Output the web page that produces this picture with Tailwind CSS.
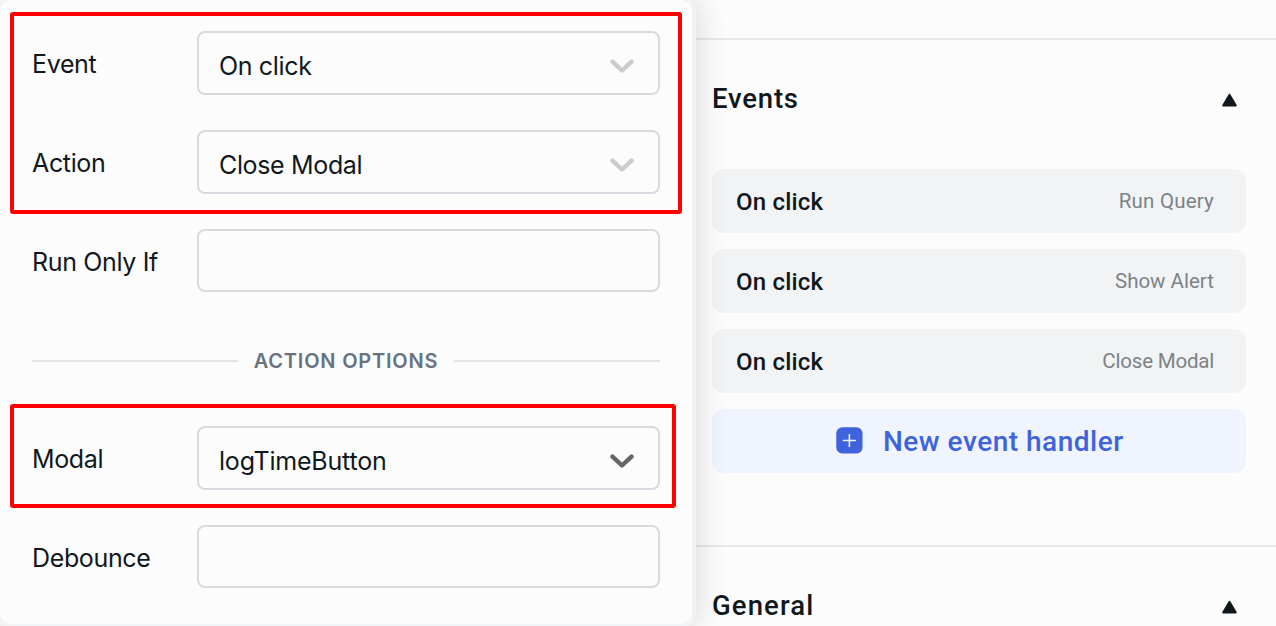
<!DOCTYPE html>
<html lang="en">
<head>
<meta charset="utf-8">
<title>Event handlers</title>
<script src="https://cdn.jsdelivr.net/npm/@tailwindcss/browser@4"></script>
</head>
<body class="h-[626px] w-[1276px] overflow-hidden bg-[#fcfcfc] text-[#11181c]">
<div class="flex h-[626px] overflow-hidden">
  <section class="relative z-10 -mt-1 -ml-1 h-[632px] w-[700px] shrink-0 rounded-2xl border-4 border-[#f1f3f5] bg-[#fcfcfc] pt-[31px] pl-8 font-['Inter',sans-serif] text-[25px] tracking-[-0.35px] shadow-[0_0_32px_rgba(0,0,0,0.16)]">
    <div class="flex w-[628px] flex-col">
      <div class="flex h-16"><div class="w-[165px] pt-[14px] leading-[38px]">Event</div>
        <div class="flex flex-1 items-center justify-between rounded-lg border-2 border-[#d7dbdf] pr-6 pl-5"><span class="pt-[7px]">On click</span>
          <svg class="h-7 w-[25px]" viewBox="0 0 25 28" fill="none" stroke="#ccc" stroke-width="4.4" stroke-linecap="round" stroke-linejoin="round"><path d="M3.5 12.6 13 21.5 22.5 12.6"/></svg></div></div>
      <div class="mt-[35px] flex h-16"><div class="w-[165px] pt-[14px] leading-[38px]">Action</div>
        <div class="flex flex-1 items-center justify-between rounded-lg border-2 border-[#d7dbdf] pr-6 pl-5"><span class="pt-[7px]">Close Modal</span>
          <svg class="h-7 w-[25px]" viewBox="0 0 25 28" fill="none" stroke="#ccc" stroke-width="4.4" stroke-linecap="round" stroke-linejoin="round"><path d="M3.5 12.6 13 21.5 22.5 12.6"/></svg></div></div>
      <div class="mt-[35px] flex h-[63px]"><div class="w-[165px] pt-[14px] leading-[38px]">Run Only If</div>
        <div class="flex-1 rounded-lg border-2 border-[#d7dbdf]"></div></div>
      <div class="mt-[49px] flex h-10 items-center gap-4"><div class="h-0.5 flex-1 bg-[#e3e4e8]"></div><div class="text-xl font-semibold tracking-[0.8px] text-[#687280]">ACTION OPTIONS</div><div class="h-0.5 flex-1 bg-[#e3e4e8]"></div></div>
      <div class="mt-[45px] flex h-16"><div class="w-[165px] pt-[14px] leading-[38px]">Modal</div>
        <div class="flex flex-1 items-center justify-between rounded-lg border-2 border-[#d7dbdf] pr-6 pl-5"><span class="pt-[7px] tracking-[-0.2px]">logTimeButton</span>
          <svg class="h-7 w-[25px]" viewBox="0 0 25 28" fill="none" stroke="#666" stroke-width="4.4" stroke-linecap="round" stroke-linejoin="round"><path d="M3.5 12.6 13 21.5 22.5 12.6"/></svg></div></div>
      <div class="mt-[35px] flex h-[63px]"><div class="w-[165px] pt-[14px] leading-[38px]">Debounce</div>
        <div class="flex-1 rounded-lg border-2 border-[#d7dbdf]"></div></div>
    </div>
    <!-- Highlight frames over the form rows -->
    <div class="absolute top-[12px] left-[10px] h-[202px] w-[672px] rounded-[3px] border-4 border-[#f00]"></div>
    <div class="absolute top-[404px] left-[10px] h-[104px] w-[666px] rounded-[3px] border-4 border-[#f00]"></div>
  </section>
  <aside class="h-[626px] flex-1 pt-[38px] font-['Roboto',sans-serif] font-medium">
    <div class="border-t-2 border-[#e6e8eb] pr-[30px] pl-4">
      <div class="flex h-[118px] items-center justify-between pr-2 text-[27.5px]"><span class="tracking-[0.8px]">Events</span>
        <svg class="mt-[1px] h-4 w-[17px]" viewBox="0 0 17 16" fill="#11181c" stroke="#11181c" stroke-width="2" stroke-linejoin="round"><path d="M8.5 2.8 14.8 13.5H2.2Z"/></svg></div>
      <div class="mt-[11px] flex flex-col gap-4 text-2xl">
        <div class="flex h-16 items-center justify-between rounded-xl bg-[#f1f3f5] pr-8 pl-6"><span class="pt-0.5 tracking-[0.2px]">On click</span><span class="pt-0.5 text-[20.5px] font-normal tracking-[0.2px] text-[#7b8388]">Run Query</span></div>
        <div class="flex h-16 items-center justify-between rounded-xl bg-[#f1f3f5] pr-8 pl-6"><span class="pt-0.5 tracking-[0.2px]">On click</span><span class="pt-0.5 text-[20.5px] font-normal text-[#7b8388]">Show Alert</span></div>
        <div class="flex h-16 items-center justify-between rounded-xl bg-[#f1f3f5] pr-8 pl-6"><span class="pt-0.5 tracking-[0.2px]">On click</span><span class="pt-0.5 text-[20.5px] font-normal tracking-[-0.2px] text-[#7b8388]">Close Modal</span></div>
        <div class="flex h-16 items-center rounded-xl bg-[#f0f4ff] pl-[124px] text-[28px] text-[#3e63dd]">
          <svg class="mr-5 -mt-0.5 h-[27px] w-[27px]" viewBox="0 0 27 27"><rect x="0.3" y="0.3" width="26.2" height="26.2" rx="6" fill="#3e63dd"/><path d="M13.4 7.5v12M7.4 13.5h12" stroke="#f0f4ff" stroke-width="1.6" stroke-linecap="round"/></svg><span class="pt-0.5 tracking-[0.5px]">New event handler</span></div>
      </div>
    </div>
    <div class="mt-[72px] h-[81px] overflow-hidden border-t-2 border-[#e6e8eb] pr-[30px] pl-4">
      <div class="flex items-start justify-between pt-[42px] pr-2 text-[27.5px] leading-[34px]"><span class="tracking-[1.1px]">General</span>
        <svg class="mt-[10px] h-4 w-[17px]" viewBox="0 0 17 16" fill="#11181c" stroke="#11181c" stroke-width="2" stroke-linejoin="round"><path d="M8.5 2.8 14.8 13.5H2.2Z"/></svg></div>
    </div>
  </aside>
</div>
</body>
</html>
